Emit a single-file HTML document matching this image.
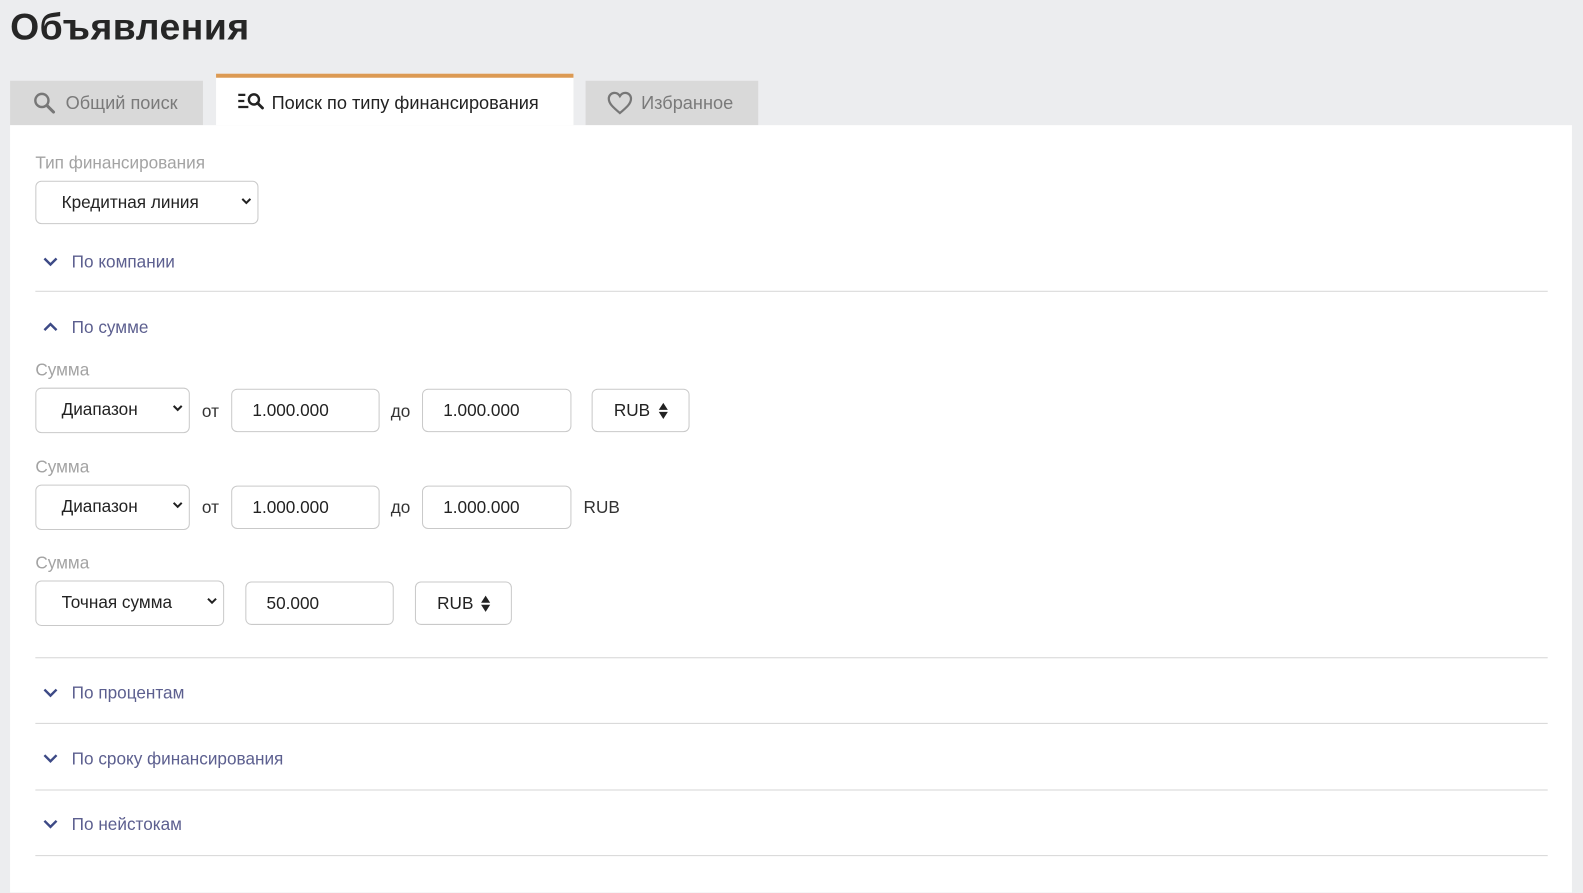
<!DOCTYPE html>
<html><head><meta charset="utf-8">
<style>
html,body{margin:0;padding:0;width:1583px;height:867px;overflow:hidden;background:#ecedef;}
#w{position:absolute;left:0;top:0;width:1568px;height:860px;transform:scale(1.0096);transform-origin:0 0;font-family:"Liberation Sans",sans-serif;}
.a{position:absolute;}
h1{position:absolute;left:10px;top:6px;margin:0;font-size:37px;font-weight:bold;color:#262626;letter-spacing:0.5px;}
.tab{position:absolute;top:80px;height:44px;background:#d9d9d9;color:#7a7a7a;font-size:18px;line-height:44px;}
.panel{position:absolute;left:10px;top:124px;width:1547px;height:760px;background:#fff;}
.lbl{position:absolute;left:35px;font-size:17px;color:#a3a3a3;line-height:20px;}
.box{position:absolute;height:43px;border:1px solid #c9c9c9;border-radius:6px;background:#fff;box-sizing:border-box;font-size:17px;color:#222;line-height:41px;}
.sel svg{position:absolute;right:6px;top:15px;}
.acc{position:absolute;left:40px;font-size:17px;color:#5c5f8f;line-height:20px;}
.acc svg{position:absolute;left:2px;top:3px;}
.acc span{position:absolute;left:31px;top:0;white-space:nowrap;}
.line{position:absolute;left:35px;width:1498px;height:1px;background:#d6d6d6;}
.t{position:absolute;font-size:17px;color:#333;line-height:20px;}
.ud{position:absolute;right:20px;top:12px;}
</style></head><body><div id="w">
<h1>Объявления</h1>
<div class="tab" style="left:10px;width:191px;">
<svg class="a" style="left:23px;top:11px" width="22" height="22" viewBox="0 0 22 22"><circle cx="8.5" cy="8.5" r="6.5" fill="none" stroke="#777" stroke-width="2.4"/><path d="M13.5 13.5L20 20" stroke="#777" stroke-width="3" stroke-linecap="round"/></svg>
<span class="a" style="left:55px;">Общий поиск</span></div>
<div class="tab" style="left:214px;top:73px;height:51px;width:354px;background:#fff;color:#222;">
<div class="a" style="left:0;top:0;width:354px;height:4px;background:#dc9a53;"></div>
<svg class="a" style="left:21px;top:18px" width="27" height="20" viewBox="0 0 27 20"><path d="M1 3h7M1 9h6M1 15h10" stroke="#222" stroke-width="2.2"/><circle cx="16.5" cy="7.5" r="5" fill="none" stroke="#222" stroke-width="2.4"/><path d="M20 11l5 5" stroke="#222" stroke-width="2.8" stroke-linecap="round"/></svg>
<span class="a" style="left:55px;top:7px;">Поиск по типу финансирования</span></div>
<div class="tab" style="left:580px;width:171px;">
<svg class="a" style="left:21px;top:10px" width="26" height="24" viewBox="0 0 26 24"><path d="M13 22C6 16 2 12.5 2 7.8 2 4.5 4.5 2 7.6 2c2.2 0 4.200 1.3 5.4 3.2C14.2 3.3 16.2 2 18.4 2 21.5 2 24 4.5 24 7.8 24 12.5 20 16 13 22z" fill="none" stroke="#777" stroke-width="2.2"/></svg>
<span class="a" style="left:55px;">Избранное</span></div>
<div class="panel"></div>

<div class="lbl" style="top:152px;">Тип финансирования</div>
<div class="box sel" style="left:35px;top:179px;width:221px;"><span class="a" style="left:25px;">Кредитная линия</span><svg width="10" height="8" viewBox="0 0 10 8"><path d="M1 2l4 4 4-4" fill="none" stroke="#222" stroke-width="2"/></svg></div>

<div class="acc" style="top:250px;"><svg width="16" height="12" viewBox="0 0 16 12"><path d="M2 3l6 6 6-6" fill="none" stroke="#3d4a86" stroke-width="2.4"/></svg><span>По компании</span></div>
<div class="line" style="top:288px;"></div>
<div class="acc" style="top:315px;"><svg width="16" height="12" viewBox="0 0 16 12"><path d="M2 9l6-6 6 6" fill="none" stroke="#3d4a86" stroke-width="2.4"/></svg><span>По сумме</span></div>

<div class="lbl" style="top:357px;">Сумма</div>
<div class="box sel" style="left:35px;top:384px;width:153px;height:45px;"><span class="a" style="left:25px;">Диапазон</span><svg width="10" height="8" viewBox="0 0 10 8"><path d="M1 2l4 4 4-4" fill="none" stroke="#222" stroke-width="2"/></svg></div>
<div class="t" style="left:200px;top:398px;">от</div>
<div class="box" style="left:229px;top:385px;width:147px;"><span class="a" style="left:20px;">1.000.000</span></div>
<div class="t" style="left:387px;top:398px;">до</div>
<div class="box" style="left:418px;top:385px;width:148px;"><span class="a" style="left:20px;">1.000.000</span></div>
<div class="box" style="left:586px;top:385px;width:97px;"><span class="a" style="left:21px;">RUB</span><svg class="ud" width="10" height="18" viewBox="0 0 10 18"><path d="M5 1l4.5 7h-9zM5 17l4.5-7h-9z" fill="#222"/></svg></div>

<div class="lbl" style="top:453px;">Сумма</div>
<div class="box sel" style="left:35px;top:480px;width:153px;height:45px;"><span class="a" style="left:25px;">Диапазон</span><svg width="10" height="8" viewBox="0 0 10 8"><path d="M1 2l4 4 4-4" fill="none" stroke="#222" stroke-width="2"/></svg></div>
<div class="t" style="left:200px;top:493px;">от</div>
<div class="box" style="left:229px;top:481px;width:147px;"><span class="a" style="left:20px;">1.000.000</span></div>
<div class="t" style="left:387px;top:493px;">до</div>
<div class="box" style="left:418px;top:481px;width:148px;"><span class="a" style="left:20px;">1.000.000</span></div>
<div class="t" style="left:578px;top:493px;">RUB</div>

<div class="lbl" style="top:548px;">Сумма</div>
<div class="box sel" style="left:35px;top:575px;width:187px;height:45px;"><span class="a" style="left:25px;">Точная сумма</span><svg width="10" height="8" viewBox="0 0 10 8"><path d="M1 2l4 4 4-4" fill="none" stroke="#222" stroke-width="2"/></svg></div>
<div class="box" style="left:243px;top:576px;width:147px;"><span class="a" style="left:20px;">50.000</span></div>
<div class="box" style="left:411px;top:576px;width:96px;"><span class="a" style="left:21px;">RUB</span><svg class="ud" width="10" height="18" viewBox="0 0 10 18"><path d="M5 1l4.5 7h-9zM5 17l4.5-7h-9z" fill="#222"/></svg></div>

<div class="line" style="top:651px;"></div>
<div class="acc" style="top:677px;"><svg width="16" height="12" viewBox="0 0 16 12"><path d="M2 3l6 6 6-6" fill="none" stroke="#3d4a86" stroke-width="2.4"/></svg><span>По процентам</span></div>
<div class="line" style="top:716px;"></div>
<div class="acc" style="top:742px;"><svg width="16" height="12" viewBox="0 0 16 12"><path d="M2 3l6 6 6-6" fill="none" stroke="#3d4a86" stroke-width="2.4"/></svg><span>По сроку финансирования</span></div>
<div class="line" style="top:782px;"></div>
<div class="acc" style="top:807px;"><svg width="16" height="12" viewBox="0 0 16 12"><path d="M2 3l6 6 6-6" fill="none" stroke="#3d4a86" stroke-width="2.4"/></svg><span>По нейстокам</span></div>
<div class="line" style="top:847px;"></div>
</div></body></html>
